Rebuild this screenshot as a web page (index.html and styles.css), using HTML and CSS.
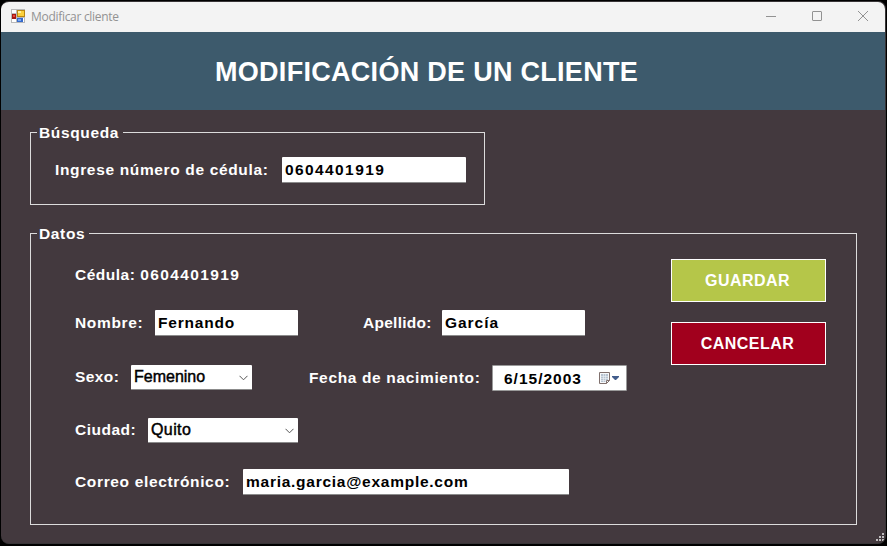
FILE: index.html
```html
<!DOCTYPE html>
<html lang="es">
<head>
<meta charset="utf-8">
<title>Modificar cliente</title>
<link rel="stylesheet" href="styles.css">
</head>
<body>
<div class="window">
  <div class="titlebar">
    <svg class="app-icon" width="14" height="14" viewBox="0 0 14 14" shape-rendering="crispEdges">
      <rect width="14" height="14" fill="#b9b9b9"/>
      <path d="M1 1h4v3H1zM1 10h4v3H1zM12 9h1v4h-1z" fill="#fff"/>
      <rect x="1" y="5" width="4" height="5" fill="#a51713"/>
      <rect x="2" y="6" width="2" height="2" fill="#e8493a"/>
      <rect x="6" y="1" width="8" height="7" fill="#ba8712"/>
      <rect x="7" y="2" width="6" height="5" fill="#fbd03c"/>
      <rect x="7" y="2" width="3" height="2" fill="#fff0a0"/>
      <rect x="6" y="9" width="6" height="4" fill="#3569cb"/>
      <rect x="7" y="10" width="3" height="2" fill="#78a8f4"/>
    </svg>
    <span class="caption">Modificar cliente</span>
    <div class="controls">
      <svg width="10" height="10" viewBox="0 0 10 10"><path d="M0 5.5h10"/></svg>
      <svg width="10" height="10" viewBox="0 0 10 10"><rect x=".5" y=".5" width="9" height="9" rx=".5"/></svg>
      <svg width="10" height="10" viewBox="0 0 10 10"><path d="M0 0l10 10M10 0L0 10"/></svg>
    </div>
  </div>
  <header class="header"><h1>MODIFICACIÓN DE UN CLIENTE</h1></header>
  <main class="content">
    <fieldset class="group search">
      <legend>Búsqueda</legend>
      <div class="row search-row">
        <span class="label l-search">Ingrese número de cédula:</span>
        <div class="field f-search digits">0604401919</div>
      </div>
    </fieldset>
    <fieldset class="group data">
      <legend class="l-data">Datos</legend>
      <div class="columns">
        <div class="form">
          <div class="row r-id"><span class="label l-id">Cédula: <span class="digits">0604401919</span></span></div>
          <div class="row r-name">
            <span class="label l-name">Nombre:</span><div class="field f-name">Fernando</div>
            <span class="label l-last">Apellido:</span><div class="field f-last">García</div>
          </div>
          <div class="row r-sex">
            <span class="label l-sex">Sexo:</span>
            <div class="field combo f-sex"><span>Femenino</span><svg width="9" height="6" viewBox="0 0 9 6"><path d="M.5 .8l4 4 4-4"/></svg></div>
            <span class="label l-date">Fecha de nacimiento:</span>
            <div class="field date"><span>6/15/2003</span>
              <svg width="21" height="13" viewBox="0 0 21 13">
                <path d="M.5 .5h10v8l-3 3h-7z" fill="#f7f9fb" stroke="#80706d"/>
                <path d="M2 2h7v6H7v2H2z" fill="#b7c3d0"/>
                <path d="M2 4.5h7M2 6.5h7M2 8.5h5M4.5 2v8M6.5 2v8" stroke="#edf2f7" stroke-width=".6"/>
                <path d="M7.5 11.5v-3h3" fill="none" stroke="#80706d"/>
                <path d="M13 4h7v1l-3 3h-1l-3-3z" fill="#425d8c"/>
              </svg>
            </div>
          </div>
          <div class="row r-city">
            <span class="label l-city">Ciudad:</span>
            <div class="field combo f-city"><span>Quito</span><svg width="9" height="6" viewBox="0 0 9 6"><path d="M.5 .8l4 4 4-4"/></svg></div>
          </div>
          <div class="row r-mail">
            <span class="label l-mail">Correo electrónico:</span><div class="field f-mail">maria.garcia@example.com</div>
          </div>
        </div>
        <div class="actions">
          <button class="btn save">GUARDAR</button>
          <button class="btn cancel">CANCELAR</button>
        </div>
      </div>
    </fieldset>
  </main>
  <svg class="grip" width="8" height="8" viewBox="0 0 8 8" shape-rendering="crispEdges"><path d="M6 0h2v2H6zM3 3h2v2H3zM6 3h2v2H6zM0 6h2v2H0zM3 6h2v2H3zM6 6h2v2H6z" fill="#bfbdbe"/></svg>
</div>
</body>
</html>
```
FILE: styles.css
```css
* { box-sizing: border-box; }
html, body { height: 100%; }
body {
  margin: 0;
  padding: 1px 1px 2px 1px;
  background: #000;
  font-family: "Liberation Sans", Arial, sans-serif;
  font-size: 15.5px;
  font-weight: bold;
  letter-spacing: .65px;
  color: #fff;
  overflow: hidden;
}
.window {
  position: relative;
  height: 543px;
  background: #43393e;
  border-radius: 8px;
  overflow: hidden;
  border: 1px solid #383537;
  border-width: 1px 1px 1px 0;
}
.titlebar {
  display: flex;
  align-items: center;
  height: 30px;
  padding: 0 17px 0 10px;
  background: #f3f3f3;
}
.app-icon { margin-top: -2px; }
.caption {
  flex: 1;
  margin: 0 0 0 6px;
  font: 12px/16px "Open Sans", "Noto Sans", sans-serif;
  letter-spacing: -.3px;
  color: #929292;
}
.controls { display: flex; gap: 36px; margin-top: -2px; }
.controls svg { fill: none; stroke: #929292; stroke-width: 1; }
.header {
  height: 78px;
  padding: 25px 0 0 214px;
  background: #3d5a6c;
}
h1 {
  margin: 0;
  font-size: 27px;
  line-height: 30px;
  letter-spacing: .29px;
  white-space: nowrap;
}
.content { padding: 13px 0 0 29px; }
.group {
  margin: 0;
  padding: 0;
  border: 1px solid #dcdcdc;
  min-width: 0;
}
legend {
  margin-left: 6px;
  padding: 0 3px 0 2px;
  line-height: 19px;
  width: 86px;
  white-space: nowrap;
}
.l-data { width: 52px; }
.search { width: 455px; height: 82px; }
.data { width: 827px; height: 301px; margin-top: 19px; }
.row { display: flex; align-items: center; white-space: nowrap; }
.search-row { height: 26px; margin: 15px 0 0 24px; }
.label { flex: none; line-height: 18px; }
.l-search { width: 227px; }
.field {
  flex: none;
  height: 26px;
  padding: 0 3px;
  line-height: 25px;
  background: #fff;
  color: #000;
  border-radius: 1px;
  border-bottom: 1px solid #8b8b8b;
}
.f-search { width: 184px; }
.digits { letter-spacing: 1.4px; }
.columns { display: flex; justify-content: space-between; padding: 0 30px 0 44px; }
.form { padding-top: 22px; }
.l-id { letter-spacing: .5px; }
.r-id { height: 20px; }
.r-name { height: 26px; margin-top: 25px; }
.r-sex { height: 26px; margin-top: 29px; }
.r-city { height: 25px; margin-top: 27px; }
.r-mail { height: 26px; margin-top: 26px; }
.l-name { width: 80px; }
.f-name, .f-last { width: 143px; }
.f-name { letter-spacing: .8px; }
.f-last { letter-spacing: .95px; }
.l-last { width: 79px; margin-left: 65px; letter-spacing: .27px; }
.l-sex { width: 56px; margin-top: -2px; letter-spacing: .4px; }
.combo {
  display: flex;
  align-items: center;
  justify-content: space-between;
  padding: 0 4px 0 3px;
  height: 25px;
  line-height: 22px;
  font-size: 16px;
  font-weight: normal;
  letter-spacing: 0;
  -webkit-text-stroke: .45px #000;
}
.combo svg { fill: none; stroke: #555; margin-top: 2px; }
.f-sex { width: 121px; margin-top: -1px; }
.l-date { width: 183px; margin-left: 57px; }
.date {
  display: flex;
  align-items: center;
  justify-content: space-between;
  width: 135px;
  padding: 0 6px 0 11px;
  letter-spacing: 1px;
  border: 1px solid #9a9a9a;
}
.l-city { width: 73px; margin-top: -2px; letter-spacing: .5px; }
.f-city { width: 150px; letter-spacing: .4px; }
.l-mail { width: 168px; }
.f-mail { width: 326px; letter-spacing: .74px; }
.actions { display: flex; flex-direction: column; gap: 20px; padding-top: 16px; }
.btn {
  width: 155px;
  height: 43px;
  padding: 0 2px 0 0;
  border: 1px solid #fff;
  border-radius: 0;
  color: #fff;
  font: bold 16px "Liberation Sans", Arial, sans-serif;
  letter-spacing: .45px;
}
.save { background: #b5c649; }
.cancel { background: #a1001d; }
.grip { position: absolute; right: 1px; bottom: 2px; }
```
